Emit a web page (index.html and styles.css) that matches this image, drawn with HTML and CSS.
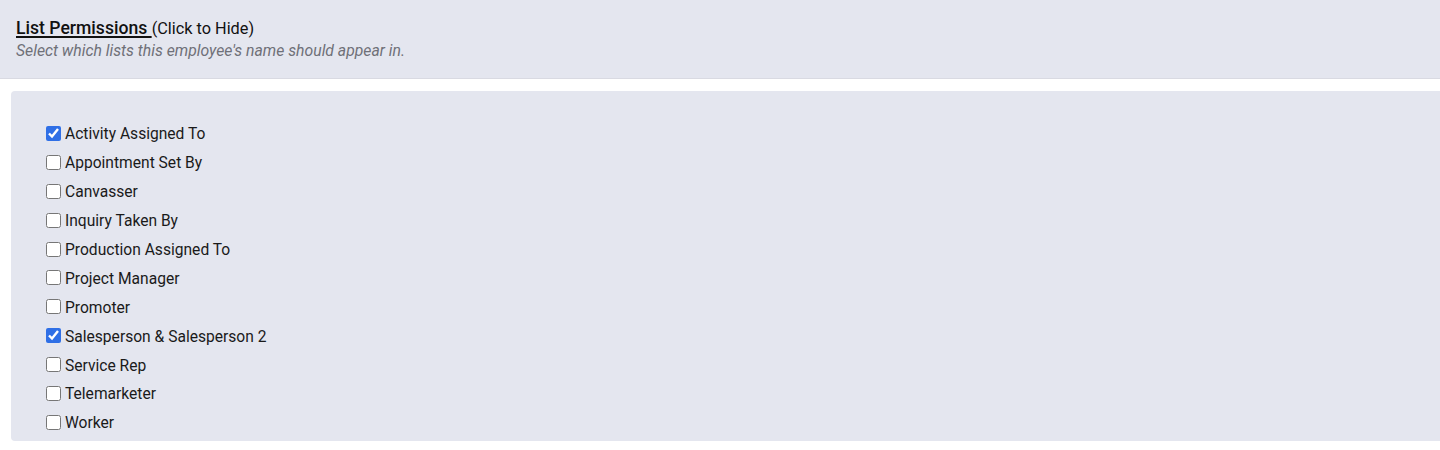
FILE: index.html
```html
<!DOCTYPE html>
<html>
<head>
<meta charset="utf-8">
<link rel="stylesheet" href="styles.css">
</head>
<body>
<div class="header">
  <div class="title"><span class="title-link">List Permissions </span><span class="title-hint">(Click to Hide)</span></div>
  <div class="subtitle">Select which lists this employee's name should appear in.</div>
</div>
<div class="panel">
  <label class="row"><input type="checkbox" checked><span>Activity Assigned To</span></label>
  <label class="row"><input type="checkbox"><span>Appointment Set By</span></label>
  <label class="row"><input type="checkbox"><span>Canvasser</span></label>
  <label class="row"><input type="checkbox"><span>Inquiry Taken By</span></label>
  <label class="row"><input type="checkbox"><span>Production Assigned To</span></label>
  <label class="row"><input type="checkbox"><span>Project Manager</span></label>
  <label class="row"><input type="checkbox"><span>Promoter</span></label>
  <label class="row"><input type="checkbox" checked><span>Salesperson &amp; Salesperson 2</span></label>
  <label class="row"><input type="checkbox"><span>Service Rep</span></label>
  <label class="row"><input type="checkbox"><span>Telemarketer</span></label>
  <label class="row"><input type="checkbox"><span>Worker</span></label>
</div>
</body>
</html>
```

FILE: styles.css
```css
html, body {
  margin: 0;
  padding: 0;
  background: #ffffff;
  font-family: Roboto, "Liberation Sans", Arial, sans-serif;
  color: #1a1a1a;
}
.header {
  background: #e4e6ef;
  border-bottom: 1px solid #d9dae2;
  height: 79px;
  box-sizing: border-box;
  padding: 18px 16px 0 16px;
}
.title {
  font-size: 16.3px;
  line-height: 21px;
  color: #111;
}
.title-link {
  font-weight: 500;
  font-size: 17.6px;
  text-decoration: underline;
  text-underline-offset: 2px;
  text-decoration-thickness: 1.5px;
}
.subtitle {
  font-size: 15.75px;
  font-style: italic;
  color: #6f7078;
  line-height: 21px;
  margin-top: 1px;
}
.panel {
  margin: 12px 0 0 11px;
  background: #e4e6ef;
  border-radius: 4px 0 0 4px;
  height: 350px;
  box-sizing: border-box;
  padding: 29px 0 0 46px;
  display: flex;
  flex-direction: column;
}
.row {
  display: flex;
  align-items: center;
  height: 28.9px;
  font-size: 15.6px;
  color: #1a1a1a;
}
.row input {
  width: 15px;
  height: 15px;
  margin: 0 4px 0 -11px;
  accent-color: #2f6fe6;
  transform: translateY(-1px);
}
```
